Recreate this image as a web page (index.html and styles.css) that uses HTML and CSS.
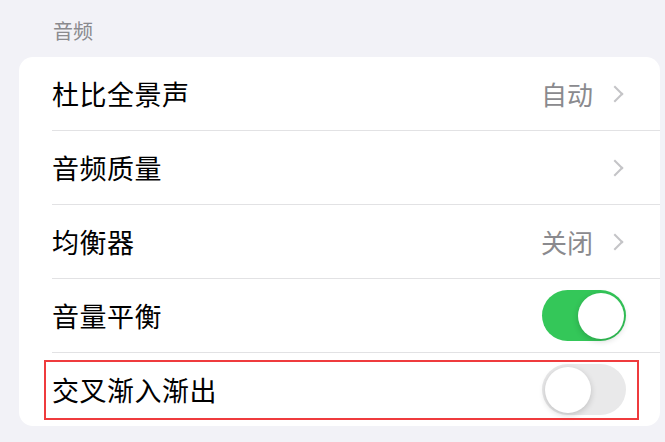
FILE: index.html
```html
<!DOCTYPE html>
<html lang="zh-CN">
<head>
    <meta charset="UTF-8">
    <title>音频</title>
    <link rel="stylesheet" href="styles.css">
</head>
<body>
<div class="page">
    <div class="sectionTitle">音频</div>
    <ul class="group">
        <li class="row">
            <div class="rowBody">
                <span class="label">杜比全景声</span>
                <span class="value">自动</span>
                <span class="chevron"></span>
            </div>
        </li>
        <li class="row">
            <div class="rowBody">
                <span class="label">音频质量</span>
                <span class="chevron"></span>
            </div>
        </li>
        <li class="row">
            <div class="rowBody">
                <span class="label">均衡器</span>
                <span class="value">关闭</span>
                <span class="chevron"></span>
            </div>
        </li>
        <li class="row">
            <div class="rowBody">
                <span class="label">音量平衡</span>
                <span class="switch on"><i></i></span>
            </div>
        </li>
        <li class="row last">
            <div class="rowBody">
                <span class="label">交叉渐入渐出</span>
                <span class="switch"><i></i></span>
            </div>
            <div class="mark"></div>
        </li>
    </ul>
</div>
</body>
</html>
```

FILE: styles.css
```css
*{
    padding:0px;
    margin:0px;
    list-style: none;
    box-sizing: border-box;
}
body{
    background-color: #f2f2f7;
    font-family: "Noto Sans CJK SC", "Noto Sans", sans-serif;
    color: #000;
}
.page{
    padding:19px 5px 0px 19px;
}
.sectionTitle{
    padding-left:34px;
    height:24px;
    line-height: 24px;
    font-size: 20px;
    color: #8a8a8e;
    margin-bottom:14px;
}
.group{
    position: relative;
    background-color: #fff;
    border-radius: 14px;
    overflow: hidden;
}
.row{
    position: relative;
    padding-left:33px;
}
.rowBody{
    display: flex;
    align-items: center;
    height:74px;
    padding-right:34px;
    border-bottom: 1px solid #e2e2e4;
}
.row.last .rowBody{
    border-bottom: none;
    height:73px;
}
.label{
    flex:1;
    font-size: 27px;
    letter-spacing: 0.5px;
}
.value{
    font-size: 26px;
    color: #8a8a8e;
    margin-right:16px;
}
.chevron{
    width:12px;
    height:12px;
    margin-right:5px;
    border-top: 2.5px solid #c4c4c7;
    border-right: 2.5px solid #c4c4c7;
    transform: rotate(45deg);
}
.switch{
    position: relative;
    width:84px;
    height:51px;
    border-radius: 26px;
    background-color: #e9e9ea;
}
.switch i{
    position: absolute;
    top:2.5px;
    left:2.5px;
    width:46px;
    height:46px;
    border-radius: 50%;
    background-color: #fff;
    box-shadow: 0px 2px 6px rgba(0,0,0,0.18);
}
.switch.on{
    background-color: #34c759;
}
.switch.on i{
    left:auto;
    right:2.5px;
}
.mark{
    position: absolute;
    left:25px;
    top:7px;
    width:595px;
    height:60px;
    border:2px solid #ef3b3d;
}
```
